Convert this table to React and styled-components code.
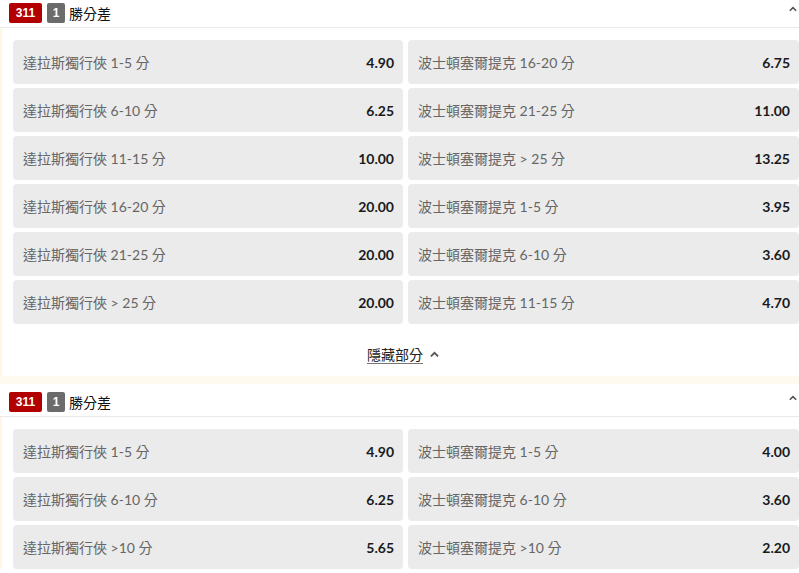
import { createGlobalStyle } from 'styled-components';
import styled from 'styled-components';

const markets = [
   {
      rows: [
         ['達拉斯獨行俠 1-5 分', '4.90', '波士頓塞爾提克 16-20 分', '6.75'],
         ['達拉斯獨行俠 6-10 分', '6.25', '波士頓塞爾提克 21-25 分', '11.00'],
         ['達拉斯獨行俠 11-15 分', '10.00', '波士頓塞爾提克 > 25 分', '13.25'],
         ['達拉斯獨行俠 16-20 分', '20.00', '波士頓塞爾提克 1-5 分', '3.95'],
         ['達拉斯獨行俠 21-25 分', '20.00', '波士頓塞爾提克 6-10 分', '3.60'],
         ['達拉斯獨行俠 > 25 分', '20.00', '波士頓塞爾提克 11-15 分', '4.70'],
      ],
      footer: true,
   },
   {
      rows: [
         ['達拉斯獨行俠 1-5 分', '4.90', '波士頓塞爾提克 1-5 分', '4.00'],
         ['達拉斯獨行俠 6-10 分', '6.25', '波士頓塞爾提克 6-10 分', '3.60'],
         ['達拉斯獨行俠 >10 分', '5.65', '波士頓塞爾提克 >10 分', '2.20'],
      ],
      footer: false,
   },
];

const Chevron = ({ size = 9, color = '#555' }) => (
   <svg width={size} height={size * 0.7} viewBox="0 0 10 7">
      <path d="M1 6 L5 2 L9 6" fill="none" stroke={color} strokeWidth="2" />
   </svg>
);

export default function App() {
   return (
      <Page>
         <Global />
         {markets.map((m, i) => (
            <Market key={i}>
               <Header>
                  <Badge color="#b20000" wide>311</Badge>
                  <Badge color="#6b6b6b">1</Badge>
                  <Title>勝分差</Title>
                  <Toggle><Chevron size={8} /></Toggle>
               </Header>
               <Body>
                  <Grid>
                     {m.rows.map((r, j) => (
                        <Fragment key={j}>
                           <Cell>
                              <Label>{r[0]}</Label>
                              <Price>{r[1]}</Price>
                           </Cell>
                           <Cell>
                              <Label>{r[2]}</Label>
                              <Price>{r[3]}</Price>
                           </Cell>
                        </Fragment>
                     ))}
                  </Grid>
                  {m.footer && (
                     <Footer>
                        <HideLink>隱藏部分</HideLink>
                        <Chevron size={9} />
                     </Footer>
                  )}
               </Body>
            </Market>
         ))}
      </Page>
   );
}

function Fragment({ children }) {
   return <>{children}</>;
}

const Global = createGlobalStyle`
   body {
      margin: 0;
      background: #fff;
      font-family: Lato, "Noto Sans CJK TC", sans-serif;
      overflow: hidden;
   }
`;

// page is scrolled a few pixels, so the first header is cut at the top
const Page = styled.div`
   width: 799px;
   margin-top: -5px;
   background: #fffaf0;
   display: flex;
   flex-direction: column;
   gap: 8px;
`;

const Market = styled.section`
   background: #fff;
`;

const Header = styled.div`
   height: 33px;
   box-sizing: border-box;
   padding: 8px 0 4px 9px;
   border-bottom: 1px solid #e9e9e9;
   display: flex;
   align-items: center;
   gap: 5px;
`;

const Badge = styled.span`
   height: 20px;
   min-width: ${({ wide }) => (wide ? '33px' : '18px')};
   box-sizing: border-box;
   padding: 0 4px;
   border-radius: 2px;
   background: ${({ color }) => color};
   color: #fff;
   font: bold 12px "Liberation Sans", Arial, sans-serif;
   display: flex;
   align-items: center;
   justify-content: center;
`;

const Title = styled.span`
   font-size: 14px;
   color: #111;
   margin-left: -1px;
   font-family: "Noto Sans CJK TC", sans-serif;
`;

const Toggle = styled.span`
   margin-left: auto;
   margin-right: 2px;
   margin-top: -8px;
   display: flex;
`;

const Body = styled.div`
   border-left: 2px solid #fff6e6;
   padding: 12px 0 0 11px;
`;

const Grid = styled.div`
   display: grid;
   grid-template-columns: 390px 391px;
   gap: 4px 5px;
`;

const Cell = styled.div`
   height: 44px;
   box-sizing: border-box;
   padding: 0 9px 0 10px;
   border-radius: 4px;
   background: #ebebeb;
   display: flex;
   align-items: center;
   justify-content: space-between;
`;

const Label = styled.span`
   font-size: 14px;
   color: #666;
`;

const Price = styled.span`
   font-size: 14px;
   font-weight: bold;
   color: #1a1a1a;
`;

const Footer = styled.div`
   height: 52px;
   box-sizing: border-box;
   padding: 8px 6px 0 0;
   display: flex;
   align-items: center;
   justify-content: center;
   gap: 7px;
`;

const HideLink = styled.span`
   font-size: 14px;
   color: #222;
   font-family: "Noto Sans CJK TC", sans-serif;
   border-bottom: 1px solid #777;
   line-height: 18px;
`;
